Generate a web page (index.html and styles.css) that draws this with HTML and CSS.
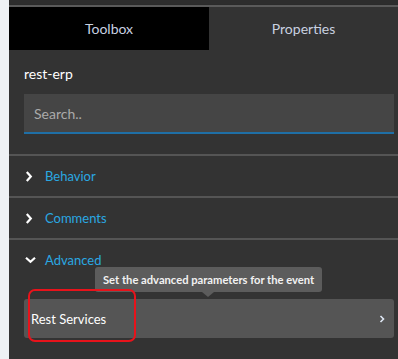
FILE: index.html
```html
<!DOCTYPE html>
<html lang="en">
<head>
    <meta charset="UTF-8">
    <title>Toolbox</title>
    <link rel="stylesheet" href="styles.css">
</head>
<body>
    <div class="page">
        <div class="gutter"></div>
        <div class="panel">
            <div class="topbar"></div>
            <div class="tabs">
                <div class="tab tab-active">Toolbox</div>
                <div class="tab">Properties</div>
            </div>

            <div class="content">
                <div class="project-name">rest-erp</div>
                <div class="search">Search..</div>
            </div>

            <div class="section">
                <div class="section-header">
                    <svg class="chevron chevron-right" width="8" height="11" viewBox="0 0 8 11"><path d="M1.8 1 L5.8 5.5 L1.8 10" fill="none" stroke="#fff" stroke-width="2.2"/></svg>
                    <span>Behavior</span>
                </div>
            </div>

            <div class="section">
                <div class="section-header">
                    <svg class="chevron chevron-right" width="8" height="11" viewBox="0 0 8 11"><path d="M1.8 1 L5.8 5.5 L1.8 10" fill="none" stroke="#fff" stroke-width="2.2"/></svg>
                    <span>Comments</span>
                </div>
            </div>

            <div class="section section-open">
                <div class="section-header">
                    <svg class="chevron" width="11" height="8" viewBox="0 0 11 8"><path d="M1 1.8 L5.5 5.8 L10 1.8" fill="none" stroke="#fff" stroke-width="2.2"/></svg>
                    <span>Advanced</span>
                </div>
                <div class="section-body">
                    <div class="tooltip">Set the advanced parameters for the event</div>
                    <div class="item">
                        <span>Rest Services</span>
                        <svg width="6" height="8" viewBox="0 0 6 8"><path d="M1.5 1 L4.5 4 L1.5 7" fill="none" stroke="#dfe8f5" stroke-width="1.6"/></svg>
                    </div>
                    <div class="highlight"></div>
                </div>
            </div>
        </div>
    </div>
</body>
</html>
```

FILE: styles.css
```css
* {
    margin: 0;
    padding: 0;
    box-sizing: border-box;
}

body {
    background-color: #333;
    font-family: 'Lato', sans-serif;
    color: #fff;
    overflow: hidden;
}

.page {
    display: flex;
    height: 359px;
}

.gutter {
    width: 9px;
    background-color: #eef1f4;
}

.panel {
    flex: 1;
    background-color: #333;
}

/* barra superior */
.topbar {
    height: 7px;
    background-color: #2b2b2b;
    border-top: 4px solid #2d2d2d;
    border-bottom: 2px solid #5a5a5a;
}

.tabs {
    display: flex;
    height: 43px;
}

.tab {
    flex: 1;
    display: flex;
    align-items: center;
    justify-content: center;
    font-size: 14px;
    color: #c9d1e0;
    background-color: #333;
}

.tab-active {
    flex: 0 0 200px;
    background-color: #000;
}

.content {
    padding: 16px 4px 0 15px;
    height: 106px;
    border-bottom: 2px solid #555;
}

.project-name {
    font-size: 14px;
    height: 22px;
    line-height: 16px;
}

.search {
    height: 40px;
    margin-top: 6px;
    background-color: #454545;
    border-bottom: 2px solid #1f6fa6;
    padding: 11px 10px 0;
    font-size: 14px;
    color: #aaa;
}

.section {
    border-bottom: 2px solid #555;
}

.section-open {
    border-bottom: none;
}

.section-header {
    height: 40px;
    display: flex;
    align-items: center;
    padding-left: 16px;
    font-size: 13px;
    color: #2aa8e2;
}

.chevron {
    margin-right: 9px;
}

.chevron-right {
    margin-right: 12px;
}

.section-body {
    position: relative;
    padding: 19px 4px 0 15px;
}

.item {
    height: 39px;
    background-color: #555;
    border-radius: 3px;
    display: flex;
    align-items: center;
    justify-content: space-between;
    padding: 0 9px 0 7px;
    font-size: 13px;
}

.tooltip {
    position: absolute;
    left: 86px;
    top: -13px;
    height: 25px;
    padding: 0 8px;
    background-color: #5c5c5c;
    border-radius: 3px;
    font-size: 11.2px;
    font-weight: bold;
    line-height: 25px;
    color: #f2f2f2;
    white-space: nowrap;
}

.tooltip::after {
    content: '';
    position: absolute;
    left: 107px;
    bottom: -5px;
    border-left: 6px solid transparent;
    border-right: 6px solid transparent;
    border-top: 5px solid #5c5c5c;
}

.highlight {
    position: absolute;
    left: 19px;
    top: 9px;
    width: 108px;
    height: 53px;
    border: 2px solid #e8131b;
    border-radius: 7px;
}
```
